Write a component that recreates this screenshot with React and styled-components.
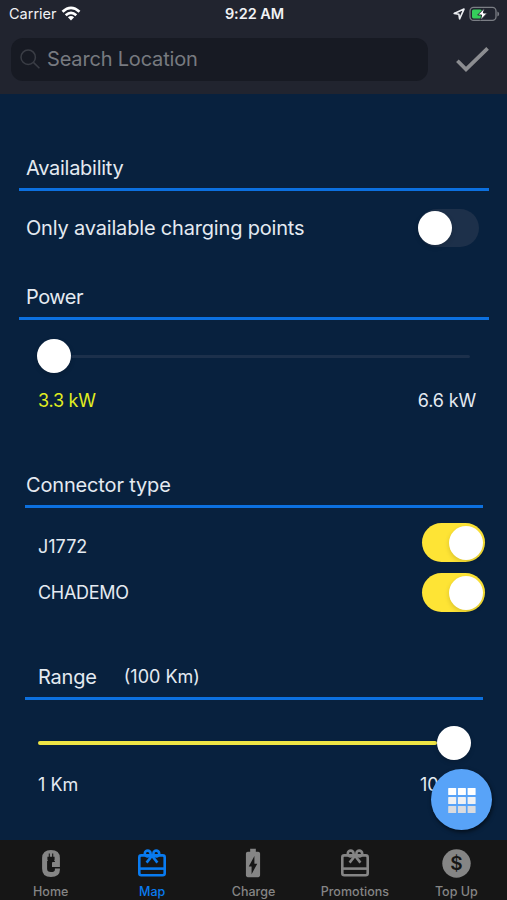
import React from "react";
import styled, { createGlobalStyle } from "styled-components";
import { MdBatteryChargingFull } from "react-icons/md";

const GlobalStyle = createGlobalStyle`
  * { box-sizing: border-box; }
  body { margin: 0; background: #08213e; }
`;

const Screen = styled.div`
  display: flex;
  flex-direction: column;
  width: 507px;
  height: 900px;
  overflow: hidden;
  background: #08213e;
  color: #e4eaf1;
  font-family: Inter, "Liberation Sans", sans-serif;
`;

const Header = styled.header`
  flex: none;
  height: 94px;
  background: #21242f;
`;

const StatusBar = styled.div`
  display: grid;
  grid-template-columns: 1fr auto 1fr;
  align-items: center;
  height: 28px;
  padding: 0 7px 0 9px;
  color: #f1f2f5;
`;

const StatusGroup = styled.div`
  display: flex;
  align-items: center;
  justify-content: ${(p) => (p.$end ? "flex-end" : "flex-start")};
  gap: 4px;
`;

const Text = styled.span`
  white-space: nowrap;
  line-height: 1.2;
  font-size: ${(p) => p.$size || 20}px;
  font-weight: ${(p) => p.$weight || 400};
  letter-spacing: ${(p) => p.$track || 0}px;
  color: ${(p) => p.$color || "inherit"};
`;

const SearchRow = styled.div`
  display: flex;
  align-items: center;
  padding: 10px 18px 0 11px;
  justify-content: space-between;
`;

const SearchField = styled.div`
  display: flex;
  align-items: center;
  gap: 7px;
  width: 417px;
  height: 43px;
  padding: 0 0 2px 9px;
  border-radius: 12px;
  background: #171a23;
`;

const Content = styled.main`
  flex: 1;
  padding-top: 54px;
`;

const Section = styled.section`
  height: ${(p) => p.$height}px;
  margin: 0 ${(p) => (p.$inset ? "24px 0 25px" : "18px 0 19px")};
`;

const SectionHeader = styled.div`
  display: flex;
  align-items: center;
  gap: 27px;
  height: 43px;
  padding-left: ${(p) => p.$indent}px;
  border-bottom: 3px solid #0c70df;
`;

const OptionRow = styled.div`
  display: flex;
  align-items: center;
  justify-content: space-between;
  height: ${(p) => p.$height}px;
  padding: ${(p) => p.$pad};
  margin-right: ${(p) => (p.$overhang ? -2 : 0)}px;
`;

const RowLabel = styled(Text)`
  padding-top: ${(p) => p.$drop || 0}px;
`;

const Switch = styled.div`
  display: flex;
  flex: none;
  align-items: center;
  justify-content: ${(p) => (p.$on ? "flex-end" : "flex-start")};
  width: ${(p) => (p.$on ? 63 : 61)}px;
  height: ${(p) => (p.$on ? 39 : 38)}px;
  padding: 0 ${(p) => (p.$on ? 2 : 0)}px;
  border-radius: 20px;
  background: ${(p) => (p.$on ? "#fee435" : "#1d304a")};
`;

const Knob = styled.div`
  flex: none;
  width: 34px;
  height: 34px;
  border-radius: 50%;
  background: #fff;
  box-shadow: 0 2px 5px rgba(0, 0, 0, 0.15);
`;

const Slider = styled.div`
  display: flex;
  align-items: center;
  width: 433px;
  height: 34px;
  margin-left: ${(p) => p.$left}px;
`;

const Track = styled.div`
  flex: 1;
  height: ${(p) => (p.$filled ? 4 : 3)}px;
  border-radius: 2px;
  background: ${(p) => (p.$filled ? "#efe545" : "#1c304b")};
`;

const Scale = styled.div`
  display: flex;
  justify-content: space-between;
  margin-top: ${(p) => p.$lift}px;
  padding: ${(p) => p.$pad};
`;

const Fab = styled.button`
  position: absolute;
  left: 431px;
  top: 769px;
  display: grid;
  place-items: center;
  width: 61px;
  height: 61px;
  padding: 1px 0 0;
  border: 0;
  border-radius: 50%;
  background: #58a3f8;
  box-shadow: 1px 2px 4px rgba(0, 0, 0, 0.6);
`;

const TabBar = styled.nav`
  display: grid;
  grid-template-columns: repeat(5, 1fr);
  flex: none;
  height: 60px;
  background: #161616;
`;

const Tab = styled.div`
  display: flex;
  flex-direction: column;
  align-items: center;
  padding-top: 6px;
  gap: 4px;
  color: ${(p) => (p.$active ? "#097bf0" : "#858585")};
`;

const IconSlot = styled.div`
  display: grid;
  place-items: center;
  height: 34px;
`;

const CoinSign = styled.text`
  font-family: Inter, "Liberation Sans", sans-serif;
  font-size: 19px;
  font-weight: 600;
  text-anchor: middle;
  fill: #161616;
`;

const WifiIcon = () => (
  <svg width="20" height="15" viewBox="0 0 20 15" fill="none" stroke="#fff" strokeWidth="2.7">
    <path d="M1.5 5.8Q10-1.9 18.5 5.8" />
    <path d="M4.7 9.2Q10 4.4 15.3 9.2" />
    <path d="M6.9 11.2Q10 8.6 13.1 11.2L10 14.5Z" fill="#fff" stroke="none" />
  </svg>
);

const LocationIcon = () => (
  <svg width="12" height="12" viewBox="0 0 12 12" fill="none" stroke="#eceef2" strokeWidth="1.6" strokeLinejoin="round">
    <path d="M1.2 5.4L11 1.1L6.6 10.8L5.9 6.3Z" />
  </svg>
);

const BatteryIcon = () => (
  <svg width="31" height="16" viewBox="0 0 31 16">
    <rect x="1" y="1.4" width="26" height="13" rx="3.6" fill="none" stroke="#7b7e85" strokeWidth="1.3" />
    <path d="M28.4 5.4Q30.2 6.2 30.2 8Q30.2 9.8 28.4 10.6Z" fill="#7b7e85" />
    <rect x="3" y="3.4" width="10" height="9" rx="1.6" fill="#35cf5b" />
    <path d="M15.6 2L8.7 9H12.6L11.5 14.2L18.4 7H14.4Z" fill="#fff" stroke="#21242f" strokeWidth="1" />
  </svg>
);

const SearchIcon = () => (
  <svg width="20" height="20" viewBox="0 0 20 20" fill="none" stroke="#3a3d45" strokeWidth="1.5">
    <circle cx="8.2" cy="8.2" r="7.2" />
    <path d="M13.4 13.4L19.4 19.2" />
  </svg>
);

const CheckIcon = () => (
  <svg width="33" height="26" viewBox="0 0 33 26" fill="none" stroke="#8c8d91" strokeWidth="3.7">
    <path d="M1.4 13.8L10 22.4L31.6 1.4" />
  </svg>
);

const PlugLogo = () => (
  <svg width="20" height="29" viewBox="0 0 20 29" fill="none">
    <path
      d="M16.4 19.4V20.8Q16.4 25.6 9.9 25.6Q3.6 25.6 3.6 19.8V9Q3.6 3.4 9.9 3.4Q16.4 3.4 16.4 9V15.4H10"
      stroke="currentColor"
      strokeWidth="5"
    />
    <path d="M5.5 5H14.5V12H5.5Z" fill="currentColor" />
    <path d="M8.3 4.4V8M11.7 4.4V8" stroke="#161616" strokeWidth="1.1" />
    <path d="M6.4 7.8H13.6V10.4Q13.6 12.8 11 13.6V18H9V13.6Q6.4 12.8 6.4 10.4Z" fill="#161616" />
  </svg>
);

const GiftIcon = () => (
  <svg width="28" height="28" viewBox="0 0 28 28" fill="none" stroke="currentColor" strokeWidth="2.6">
    <rect x="1.3" y="6.4" width="25.4" height="19.9" rx="2" />
    <path d="M1.3 19.6H26.7" />
    <circle cx="9.7" cy="4.5" r="2.9" />
    <circle cx="18.3" cy="4.5" r="2.9" />
    <path d="M8.6 13.6L14 6.8L19.4 13.6" />
  </svg>
);

const CoinIcon = () => (
  <svg width="29" height="29" viewBox="0 0 29 29">
    <circle cx="14.5" cy="14.5" r="14.2" fill="currentColor" />
    <CoinSign x="14.5" y="21.3">$</CoinSign>
  </svg>
);

const GridIcon = () => (
  <svg width="28" height="25" viewBox="0 0 28 25">
    {[0, 9, 18].map((y, row) =>
      [0, 9.7, 19.4].map((x) => (
        <rect key={`${x}-${y}`} x={x + 0.2} y={y} width="8" height="7" rx="0.6" fill={["#ffffff", "#f0f1f3", "#d9dbdf"][row]} />
      ))
    )}
  </svg>
);

const tabs = [
  { label: "Home", icon: <PlugLogo /> },
  { label: "Map", icon: <GiftIcon />, active: true },
  { label: "Charge", icon: <MdBatteryChargingFull size={34} /> },
  { label: "Promotions", icon: <GiftIcon /> , track: 0.05 },
  { label: "Top Up", icon: <CoinIcon /> },
];

export default function App() {
  return (
    <Screen>
      <GlobalStyle />
      <Header>
        <StatusBar>
          <StatusGroup>
            <Text $size={14.5}>Carrier</Text>
            <WifiIcon />
          </StatusGroup>
          <Text $size={14.5} $weight={600} $track={-0.05}>9:22 AM</Text>
          <StatusGroup $end>
            <LocationIcon />
            <BatteryIcon />
          </StatusGroup>
        </StatusBar>
        <SearchRow>
          <SearchField>
            <SearchIcon />
            <Text $size={20} $track={-0.18} $color="#777a80">Search Location</Text>
          </SearchField>
          <CheckIcon />
        </SearchRow>
      </Header>

      <Content>
        <Section $height={129}>
          <SectionHeader $indent={7}>
            <Text $track={-0.27}>Availability</Text>
          </SectionHeader>
          <OptionRow $height={74} $pad="0 10px 0 7px">
            <Text $track={-0.18}>Only available charging points</Text>
            <Switch>
              <Knob />
            </Switch>
          </OptionRow>
        </Section>

        <Section $height={188}>
          <SectionHeader $indent={7}>
            <Text $track={-0.5}>Power</Text>
          </SectionHeader>
          <OptionRow $height={72} $pad="0">
            <Slider $left={18}>
              <Knob />
              <Track />
            </Slider>
          </OptionRow>
          <Scale $lift={-2} $pad="0 13px 0 19px">
            <Text $size={18} $track={-0.25} $color="#e2ee20">3.3 kW</Text>
            <Text $size={18} $track={-0.15}>6.6 kW</Text>
          </Scale>
        </Section>

        <Section $inset $height={192}>
          <SectionHeader $indent={1}>
            <Text $track={-0.16}>Connector type</Text>
          </SectionHeader>
          <OptionRow $overhang $height={69} $pad="0 0 0 13px">
            <RowLabel $size={18} $drop={8}>J1772</RowLabel>
            <Switch $on>
              <Knob />
            </Switch>
          </OptionRow>
          <OptionRow $overhang $height={31} $pad="0 0 0 13px">
            <RowLabel $size={18} $track={-0.28}>CHADEMO</RowLabel>
            <Switch $on>
              <Knob />
            </Switch>
          </OptionRow>
        </Section>

        <Section $inset $height={180}>
          <SectionHeader $indent={13}>
            <Text $track={-0.2}>Range</Text>
            <Text $size={18}>(100 Km)</Text>
          </SectionHeader>
          <OptionRow $height={86} $pad="0">
            <Slider $left={13}>
              <Track $filled />
              <Knob />
            </Slider>
          </OptionRow>
          <Scale $lift={-12} $pad="0 0 0 13px">
            <Text $size={18}>1 Km</Text>
            <Text $size={18}>100 Km</Text>
          </Scale>
        </Section>
      </Content>

      <TabBar>
        {tabs.map((tab) => (
          <Tab key={tab.label} $active={tab.active}>
            <IconSlot>{tab.icon}</IconSlot>
            <Text $size={12.5} $weight={500} $track={tab.track}>{tab.label}</Text>
          </Tab>
        ))}
      </TabBar>

      <Fab aria-label="Open menu">
        <GridIcon />
      </Fab>
    </Screen>
  );
}
